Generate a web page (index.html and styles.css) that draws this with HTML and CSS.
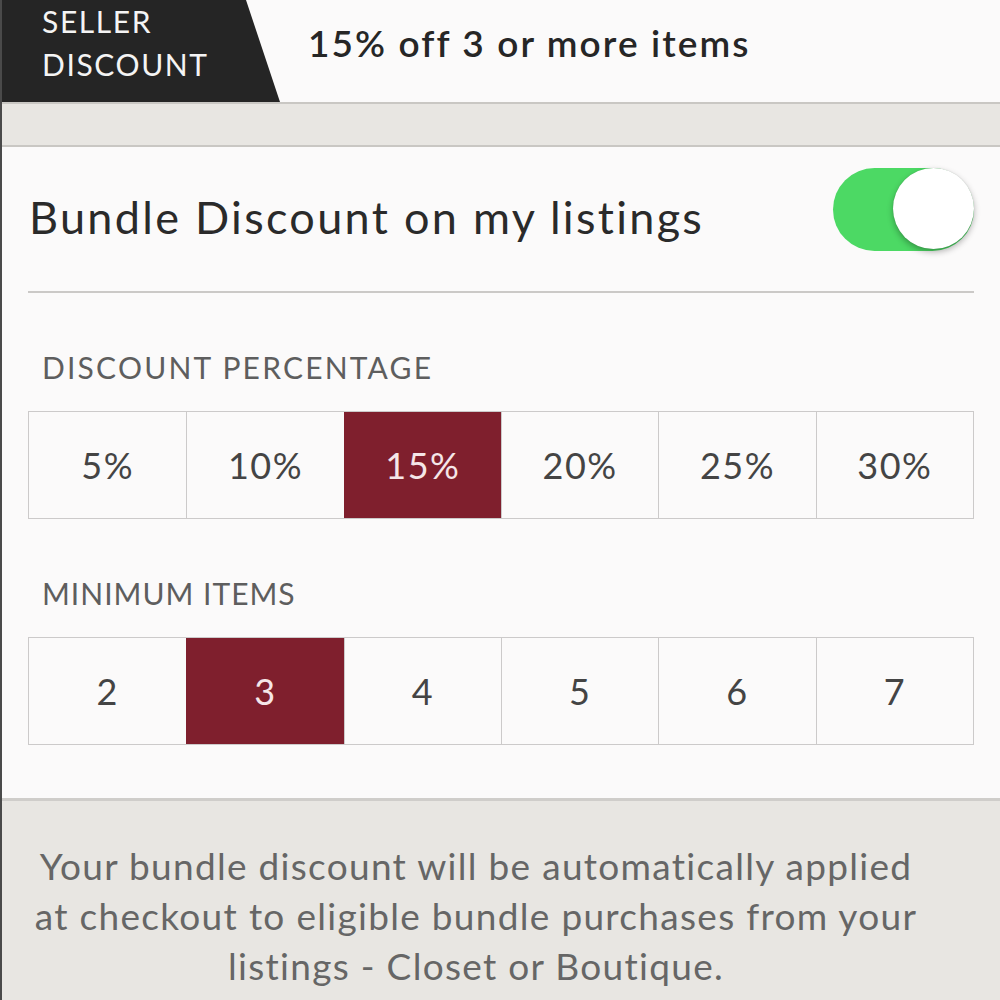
FILE: index.html
```html
<!DOCTYPE html>
<html lang="en">
<head>
<meta charset="utf-8">
<title>Bundle Discount</title>
<link rel="stylesheet" href="styles.css">
</head>
<body>
<div class="page">
  <header class="header">
    <div class="tab">SELLER<br>DISCOUNT</div>
    <div class="summary">15% off 3 or more items</div>
  </header>
  <div class="band"></div>
  <section class="card">
    <div class="toggle-row">
      <span class="toggle-label">Bundle Discount on my listings</span>
      <span class="switch"><span class="knob"></span></span>
    </div>
    <div class="divider"></div>
    <h2 class="group-title">DISCOUNT PERCENTAGE</h2>
    <div class="segments">
      <span class="seg">5%</span>
      <span class="seg">10%</span>
      <span class="seg active">15%</span>
      <span class="seg">20%</span>
      <span class="seg">25%</span>
      <span class="seg">30%</span>
    </div>
    <h2 class="group-title group-title--narrow">MINIMUM ITEMS</h2>
    <div class="segments">
      <span class="seg">2</span>
      <span class="seg active">3</span>
      <span class="seg">4</span>
      <span class="seg">5</span>
      <span class="seg">6</span>
      <span class="seg">7</span>
    </div>
  </section>
  <footer class="note">
    Your bundle discount will be automatically applied<br>
    at checkout to eligible bundle purchases from your<br>
    listings - Closet or Boutique.
  </footer>
</div>
</body>
</html>
```
FILE: styles.css
```css
html, body {
  margin: 0;
  padding: 0;
  background: #e8e6e2;
}

.page {
  width: 1000px;
  height: 1000px;
  overflow: hidden;
  display: flex;
  flex-direction: column;
  font-family: Lato, "Open Sans", sans-serif;
  border-left: 2px solid #4a4a4a;
  box-sizing: border-box;
  background: #e8e6e2;
}

/* top summary bar */
.header {
  height: 102px;
  flex: none;
  display: flex;
  align-items: stretch;
  background: #fbfafa;
  border-bottom: 2px solid #c9c7c3;
}

.tab {
  width: 280px;
  margin-left: -2px;
  padding: 0 0 0 42px;
  box-sizing: border-box;
  background: #252525;
  color: #f4f4f4;
  font-size: 30px;
  letter-spacing: 1.6px;
  line-height: 43px;
  clip-path: polygon(0 0, 246px 0, 280px 100%, 0 100%);
}

.summary {
  padding-left: 28px;
  display: flex;
  align-items: center;
  padding-bottom: 18px;
  font-size: 37px;
  letter-spacing: 2.1px;
  font-weight: 600;
  color: #262626;
}

.band {
  height: 41px;
  flex: none;
  border-bottom: 2px solid #c9c7c3;
}

/* settings card */
.card {
  flex: none;
  background: #fbfafa;
  padding: 0 26px 0 26px;
  height: 654px;
  box-sizing: border-box;
  border-bottom: 3px solid #cfcdca;
}

.toggle-row {
  height: 144px;
  display: flex;
  align-items: center;
  justify-content: space-between;
  padding-bottom: 4px;
  box-sizing: border-box;
}

.toggle-label {
  font-size: 45px;
  letter-spacing: 2.3px;
  color: #2a2a2a;
  padding-left: 1px;
}

.switch {
  position: relative;
  align-self: flex-start;
  margin-top: 21px;
  width: 141px;
  height: 83px;
  border-radius: 42px;
  background: #4cd964;
}

.knob {
  position: absolute;
  right: 0;
  top: 0;
  width: 81px;
  height: 81px;
  border-radius: 50%;
  background: #fff;
  box-shadow: 0 3px 6px rgba(0, 0, 0, 0.3), 0 0 1px rgba(0, 0, 0, 0.2);
}

.divider {
  height: 2px;
  background: #cbc9c7;
}

.group-title {
  margin: 0;
  padding: 56px 0 0 14px;
  height: 118px;
  box-sizing: border-box;
  font-size: 30px;
  letter-spacing: 2.2px;
  font-weight: 400;
  color: #5e5e5e;
  line-height: 36px;
}

.group-title--narrow {
  letter-spacing: 1px;
}

.segments {
  display: grid;
  grid-template-columns: repeat(6, 1fr);
  height: 108px;
  border: 1.5px solid #cccaca;
  box-sizing: border-box;
}

.seg {
  display: flex;
  align-items: center;
  justify-content: center;
  font-size: 36px;
  letter-spacing: 1.5px;
  color: #444;
  border-left: 1.5px solid #cccaca;
}

.seg:first-child {
  border-left: none;
}

.seg.active {
  background: #7f1f2d;
  color: #f5e6e8;
  border-left-color: #7f1f2d;
}

/* explanatory footer */
.note {
  padding: 40px 50px 0 0;
  text-align: center;
  font-size: 37px;
  letter-spacing: 1.3px;
  line-height: 50px;
  color: #666;
}
```
